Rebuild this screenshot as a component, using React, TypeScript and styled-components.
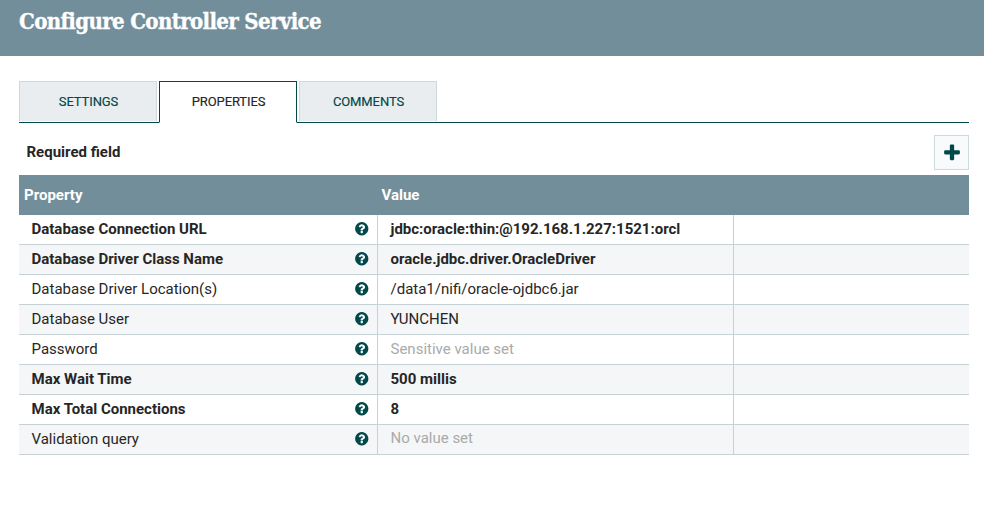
import React from "react";
import styled, { createGlobalStyle } from "styled-components";

const GlobalStyle = createGlobalStyle`
  * { box-sizing: border-box; }
  body {
    margin: 0;
    background: #fff;
    color: #262626;
    font-family: Roboto, "Liberation Sans", sans-serif;
    font-size: 15px;
  }
`;

const Dialog = styled.main`
  height: 528px;
  background: #fff;
  overflow: hidden;
`;

const Header = styled.header`
  height: 56px;
  padding: 6px 19px 0;
  background: #728e9b;
`;

const Title = styled.h1`
  margin: 0;
  color: #fff;
  font: 700 22px/30px "Roboto Slab", "DejaVu Serif Condensed", "DejaVu Serif", serif;
  font-stretch: condensed;
  letter-spacing: -0.63px;
  -webkit-text-stroke: 0.35px #fff;
  white-space: nowrap;
`;

const Content = styled.div`
  padding: 25px 15px 0 19px;
`;

const Tabs = styled.nav`
  display: flex;
  gap: 2px;
  width: 950px;
  height: 42px;
  border-bottom: 1px solid #004849;
`;

const Tab = styled.button<{ $active?: boolean }>`
  width: 138px;
  height: ${(p) => (p.$active ? 42 : 40)}px;
  padding: ${(p) => (p.$active ? "0 0 1px 1px" : "0 0 0 1px")};
  border: 1px solid ${(p) => (p.$active ? "#004849" : "#ccdadb")};
  border-bottom: ${(p) => (p.$active ? "1px solid #fff" : "0")};
  background: ${(p) => (p.$active ? "#fff" : "#e9edef")};
  color: ${(p) => (p.$active ? "#262626" : "#004849")};
  font: 400 13px/16px Roboto, sans-serif;
  letter-spacing: -0.1px;
  -webkit-text-stroke: 0.15px currentColor;
`;

const Toolbar = styled.div`
  display: flex;
  justify-content: space-between;
  width: 950px;
  height: 52px;
  padding: 12px 0 0 7.5px;
`;

const RequiredLabel = styled.span`
  font-weight: 700;
  line-height: 34px;
`;

const AddButton = styled.button`
  display: flex;
  align-items: center;
  justify-content: center;
  width: 35px;
  height: 35px;
  padding: 0 0 0 1px;
  border: 1px solid #ccdadb;
  background: #f9fafb;
  color: #004849;
`;

const Grid = styled.section`
  width: 950px;
`;

const HeaderRow = styled.div`
  display: grid;
  grid-template-columns: 357.5px 1fr;
  height: 40px;
  padding-left: 5px;
  background: #728e9b;
  color: #fff;
  font-weight: 700;
  line-height: 40px;
`;

const Row = styled.div<{ $required?: boolean }>`
  display: grid;
  grid-template-columns: 359px 356px 235px;
  height: 30px;
  background: #fff;
  font-weight: ${(p) => (p.$required ? 700 : 400)};
  line-height: 29px;
  &:nth-child(odd) { background: #f4f6f7; }
`;

const Cell = styled.div`
  display: flex;
  justify-content: space-between;
  align-items: flex-start;
  padding: 0 8px 0 12.5px;
  border-right: 1px solid #c7d2d7;
  border-bottom: 1px solid #c7d2d7;
  white-space: nowrap;
  &:last-child { border-right: 0; }
`;

const Value = styled.span<{ $muted?: boolean; $unset?: boolean }>`
  color: ${(p) => (p.$muted ? "#aaa" : "inherit")};
  line-height: ${(p) => (p.$unset ? 27 : 29)}px;
`;

const Icon = styled.svg<{ $size: number }>`
  width: ${(p) => p.$size}px;
  height: ${(p) => p.$size}px;
  flex: none;
  fill: #004849;
`;

const HelpGlyph = styled(Icon)`
  margin-top: 6px;
`;

const HelpIcon = () => (
  <HelpGlyph $size={15.5} viewBox="0 0 1792 1792" aria-hidden>
    <path d="M1024 1376v-192q0-14-9-23t-23-9h-192q-14 0-23 9t-9 23v192q0 14 9 23t23 9h192q14 0 23-9t9-23zm256-672q0-88-55.5-163t-138.5-116-170-41q-243 0-371 213-15 24 8 42l132 100q7 6 19 6 16 0 25-12 53-68 86-92 34-24 86-24 48 0 85.5 26t37.5 59q0 38-20 61t-68 45q-63 28-115.5 86.5t-52.5 125.5v36q0 14 9 23t23 9h192q14 0 23-9t9-23q0-19 21.5-49.5t54.5-49.5q32-18 49-28.5t46-35 44.5-48 28-60.5 12.5-81zm384 192q0 209-103 385.5t-279.5 279.5-385.5 103-385.5-103-279.5-279.5-103-385.5 103-385.5 279.5-279.5 385.5-103 385.5 103 279.5 279.5 103 385.5z" />
  </HelpGlyph>
);

const PlusIcon = () => (
  <Icon $size={20} viewBox="0 0 1792 1792" aria-hidden>
    <path d="M1600 736v192q0 40-28 68t-68 28h-416v416q0 40-28 68t-68 28h-192q-40 0-68-28t-28-68v-416h-416q-40 0-68-28t-28-68v-192q0-40 28-68t68-28h416v-416q0-40 28-68t68-28h192q40 0 68 28t28 68v416h416q40 0 68 28t28 68z" />
  </Icon>
);

interface Property {
  name: string;
  value: string;
  required?: boolean;
  muted?: boolean;
  unset?: boolean;
}

const properties: Property[] = [
  { name: "Database Connection URL", value: "jdbc:oracle:thin:@192.168.1.227:1521:orcl", required: true },
  { name: "Database Driver Class Name", value: "oracle.jdbc.driver.OracleDriver", required: true },
  { name: "Database Driver Location(s)", value: "/data1/nifi/oracle-ojdbc6.jar" },
  { name: "Database User", value: "YUNCHEN" },
  { name: "Password", value: "Sensitive value set", muted: true },
  { name: "Max Wait Time", value: "500 millis", required: true },
  { name: "Max Total Connections", value: "8", required: true },
  { name: "Validation query", value: "No value set", muted: true, unset: true },
];

export default function App() {
  return (
    <Dialog>
      <GlobalStyle />
      <Header>
        <Title>Configure Controller Service</Title>
      </Header>
      <Content>
        <Tabs>
          <Tab>SETTINGS</Tab>
          <Tab $active>PROPERTIES</Tab>
          <Tab>COMMENTS</Tab>
        </Tabs>
        <Toolbar>
          <RequiredLabel>Required field</RequiredLabel>
          <AddButton aria-label="Add property">
            <PlusIcon />
          </AddButton>
        </Toolbar>
        <Grid>
          <HeaderRow>
            <span>Property</span>
            <span>Value</span>
          </HeaderRow>
          {properties.map((p) => (
            <Row key={p.name} $required={p.required}>
              <Cell>
                <span>{p.name}</span>
                <HelpIcon />
              </Cell>
              <Cell>
                <Value $muted={p.muted} $unset={p.unset}>
                  {p.value}
                </Value>
              </Cell>
              <Cell />
            </Row>
          ))}
        </Grid>
      </Content>
    </Dialog>
  );
}
